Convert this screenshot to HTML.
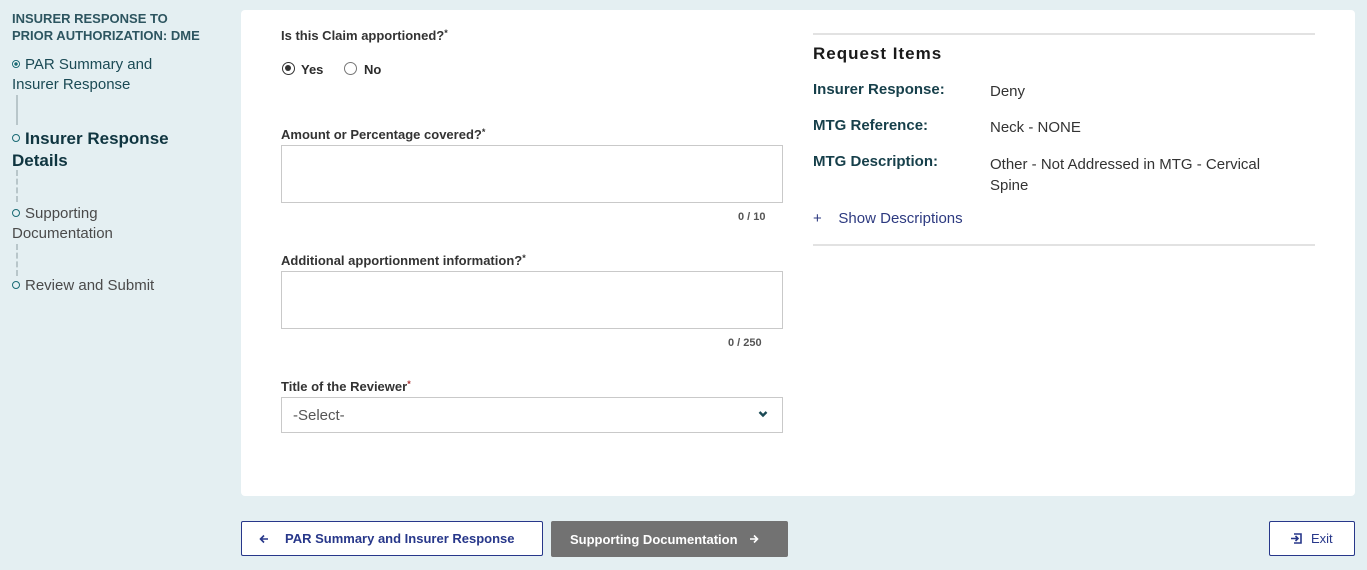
<!DOCTYPE html>
<html><head><style>
*{box-sizing:border-box;margin:0;padding:0}
body{width:1367px;height:570px;background:#e4eff2;font-family:"Liberation Sans",sans-serif;position:relative;overflow:hidden;color:#2b2b2b}
.a{position:absolute}
.card{left:241px;top:10px;width:1114px;height:486px;background:#fff;border-radius:4px}
.lbl{font-size:13px;font-weight:bold;color:#333}
.inp{border:1px solid #c9c9c9;background:#fff}
.cnt{font-size:11px;color:#555;font-weight:bold}
.k{font-size:15px;font-weight:bold;color:#163f4a}
.v{font-size:15px;color:#333}
.btn{border:1px solid #27378a;background:#fff;color:#27378a;font-size:13px;font-weight:bold;border-radius:2px;display:flex;align-items:center}
.circ{display:inline-block;width:8px;height:8px;border:1.3px solid #1a6b75;border-radius:50%;vertical-align:1px;margin-right:5px}
</style></head><body>
<div class="a" style="left:12px;top:10px;font-size:13px;font-weight:bold;line-height:17px;color:#2d5560">INSURER RESPONSE TO<br>PRIOR AUTHORIZATION: DME</div>
<div class="a" style="left:12px;top:55px;font-size:15px;line-height:20px;color:#1b4a55"><span class="circ" style="background:radial-gradient(#1a6b75 40%,#fff 45%)"></span>PAR Summary and<br>Insurer Response</div>
<div class="a" style="left:16px;top:95px;width:2px;height:30px;background:#b8c6ca"></div>
<div class="a" style="left:12px;top:128px;font-size:17px;line-height:22px;font-weight:bold;color:#0f3540"><span class="circ" style="position:relative;top:-1px"></span>Insurer Response<br>Details</div>
<div class="a" style="left:16px;top:170px;height:32px;border-left:2px dashed #b8c6ca"></div>
<div class="a" style="left:12px;top:204px;font-size:15px;line-height:20px;color:#4a4a4a"><span class="circ"></span>Supporting<br>Documentation</div>
<div class="a" style="left:16px;top:244px;height:32px;border-left:2px dashed #b8c6ca"></div>
<div class="a" style="left:12px;top:276px;font-size:15px;line-height:20px;color:#4a4a4a"><span class="circ"></span>Review and Submit</div>

<div class="a card"></div>
<div class="a lbl" style="left:281px;top:28px">Is this Claim apportioned?<span style="font-size:9px;vertical-align:4px">*</span></div>
<div class="a" style="left:282px;top:62px;width:13px;height:13px;border:1.5px solid #333;border-radius:50%"><div style="margin:2px;width:6px;height:6px;border-radius:50%;background:#333"></div></div>
<div class="a" style="left:301px;top:62px;font-size:13px;font-weight:bold">Yes</div>
<div class="a" style="left:344px;top:62px;width:13px;height:13px;border:1px solid #777;border-radius:50%"></div>
<div class="a" style="left:364px;top:62px;font-size:13px;font-weight:bold">No</div>

<div class="a lbl" style="left:281px;top:127px">Amount or Percentage covered?<span style="font-size:9px;vertical-align:4px">*</span></div>
<div class="a inp" style="left:281px;top:145px;width:502px;height:58px"></div>
<div class="a cnt" style="left:738px;top:211px">0 / 10</div>
<div class="a lbl" style="left:281px;top:253px">Additional apportionment information?<span style="font-size:9px;vertical-align:4px">*</span></div>
<div class="a inp" style="left:281px;top:271px;width:502px;height:58px"></div>
<div class="a cnt" style="left:728px;top:337px">0 / 250</div>
<div class="a lbl" style="left:281px;top:379px">Title of the Reviewer<span style="font-size:9px;vertical-align:4px;color:#a33">*</span></div>
<div class="a inp" style="left:281px;top:397px;width:502px;height:36px;font-size:15px;color:#555;padding:9px 11px">-Select-</div>
<svg class="a" style="left:757px;top:409px" width="12" height="10"><path d="M2.5 3l3.5 3.5 3.5-3.5" stroke="#1b4a55" stroke-width="2.4" fill="none"/></svg>

<div class="a" style="left:813px;top:33px;width:502px;height:2px;background:#e2e2e2"></div>
<div class="a" style="left:813px;top:44px;font-size:17px;font-weight:bold;letter-spacing:1px;color:#1a1a1a">Request Items</div>
<div class="a k" style="left:813px;top:81px">Insurer Response:</div>
<div class="a v" style="left:990px;top:83px">Deny</div>
<div class="a k" style="left:813px;top:117px">MTG Reference:</div>
<div class="a v" style="left:990px;top:119px">Neck - NONE</div>
<div class="a k" style="left:813px;top:153px">MTG Description:</div>
<div class="a v" style="left:990px;top:154px;line-height:21px">Other - Not Addressed in MTG - Cervical<br>Spine</div>
<div class="a" style="left:813px;top:210px;font-size:15px;color:#2d3a80">+&nbsp;&nbsp;&nbsp;&nbsp;Show Descriptions</div>
<div class="a" style="left:813px;top:244px;width:502px;height:2px;background:#e2e2e2"></div>

<div class="a btn" style="left:241px;top:521px;width:302px;height:35px;padding-left:17px">
<svg width="10" height="10" style="margin-right:16px"><path d="M9 5H1.5M5 1.5L1.5 5 5 8.5" stroke="#27378a" stroke-width="1.6" fill="none"/></svg>PAR Summary and Insurer Response</div>
<div class="a btn" style="left:551px;top:521px;width:237px;height:36px;background:#727272;border-color:#727272;color:#fff;padding-left:18px">Supporting Documentation
<svg width="10" height="10" style="margin-left:11px"><path d="M1 5h7.5M5 1.5L8.5 5 5 8.5" stroke="#fff" stroke-width="1.6" fill="none"/></svg></div>
<div class="a btn" style="left:1269px;top:521px;width:86px;height:35px;padding-left:20px;font-weight:normal">
<svg width="12" height="11" style="margin-right:9px"><path d="M4 1h7v9H4M1 5.5h7M5.5 3l2.5 2.5L5.5 8" stroke="#27378a" stroke-width="1.6" fill="none"/></svg>Exit</div>
</body></html>
